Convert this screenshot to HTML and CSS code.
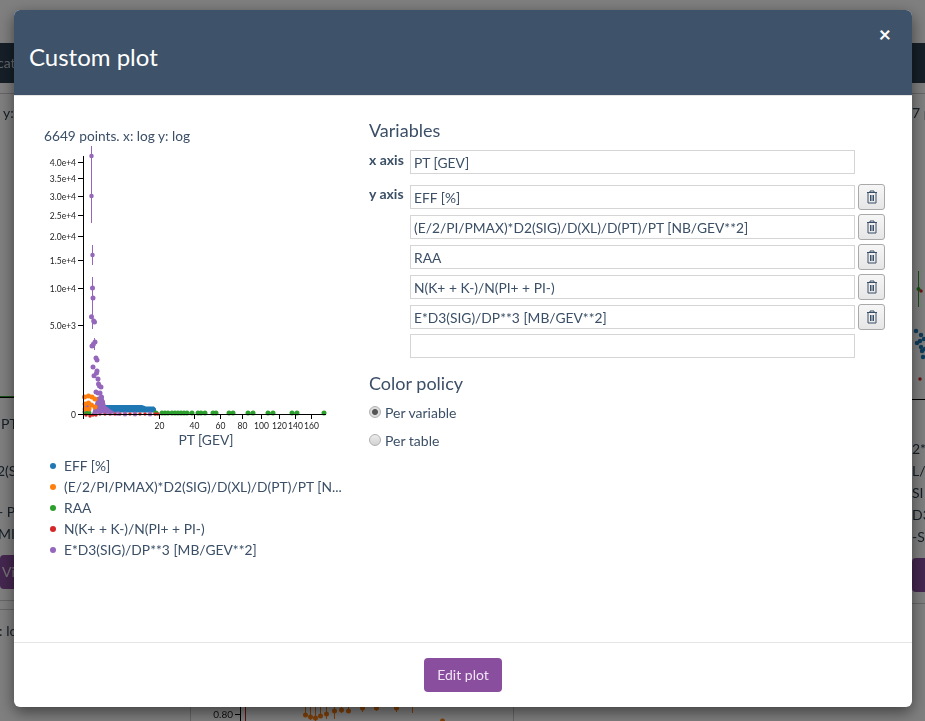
FILE: index.html
```html
<!doctype html>
<html>
<head>
    <meta charset="utf-8"/>
    <title>custom plot</title>
    <link rel="stylesheet" href="styles.css">
</head>
<body>

<div id="page">
    <div class="navbar"><span>cat</span></div>
    <div class="cards">
        <div class="card card-left">
            <div class="caption">y:</div>
            <div class="fake-plot"></div>
            <div class="fake-axis"></div>
            <div class="t1">PT</div>
            <div class="t2">2(S</div>
            <div class="t3">- P</div>
            <div class="t4">MI</div>
            <div class="fake-btn">Vi</div>
            <div class="rule"></div>
            <div class="rule rule-2"></div>
            <div class="next">r: lo</div>
        </div>
        <div class="card card-mid">
            <svg class="peek" viewBox="190 707 322 14" width="322" height="14">
                <text x="232" y="717.5" text-anchor="end">0.80</text>
                <path d="M234 714.500h5M239.500 707v14" stroke="#000" fill="none"/>
                <path d="M244.500 707v14" stroke="#c02020" fill="none"/>
                <path d="M304.500 707v10M309.500 707v13M314.500 707v14M319.500 707v10M325.500 707v12M333.500 707v12M340.500 707v6M347.500 707v6M361.500 707v5M375.500 707v4M395.500 707v5M411.500 707v6" stroke="#ff7f0e" fill="none"/>
                <path d="M304.500 715h0M309.500 717h0M314.500 718h0M319.500 716h0M325.500 714h0M333.500 711h0M340.500 710h0M347.500 711h0M361.500 708h0M375.500 708h0M395.500 708h0M441.500 721h0" stroke="#ff7f0e" stroke-width="5" stroke-linecap="round" fill="none"/>
            </svg>
        </div>
        <div class="card card-right">
            <div class="caption">7 points</div>
            <svg class="spots" viewBox="912 260 13 130" width="13" height="130">
                <path d="M918.500 262v36" stroke="#2ca02c" fill="none"/>
                <path d="M918.500 280h0" stroke="#2ca02c" stroke-width="4" stroke-linecap="round"/>
                <path d="M921 282h0M920 370h0" stroke="#d62728" stroke-width="3.500" stroke-linecap="round"/>
                <path d="M916 322h0M917 334h0M921 338h0M922 342h0M924 330h0M925 340h0M923 348h0M920 332h0M921 326h0" stroke="#1f77b4" stroke-width="4.500" stroke-linecap="round"/>
            </svg>
            <div class="fake-axis"></div>
            <div class="t1">2*</div>
            <div class="t2">L/N</div>
            <div class="t3">SI</div>
            <div class="t4">D3(</div>
            <div class="t5">-S</div>
            <div class="fake-btn"></div>
            <div class="rule"></div>
        </div>
    </div>
</div>

<div id="overlay">
    <div class="modal">
        <div class="modal-header">
            <h3>Custom plot</h3>
            <span class="close">&times;</span>
        </div>
        <div class="modal-body">
            <div class="plot-col">
                <div class="plot-caption">6649 points. x: log y: log</div>
                <svg class="plot" viewBox="40 146 305 305" width="305" height="305">
                    <g class="ticks">
                        <text x="76" y="165.500">4.0e+4</text>
                        <text x="76" y="181.500">3.5e+4</text>
                        <text x="76" y="199.500">3.0e+4</text>
                        <text x="76" y="218.500">2.5e+4</text>
                        <text x="76" y="239.500">2.0e+4</text>
                        <text x="76" y="263.500">1.5e+4</text>
                        <text x="76" y="291.500">1.0e+4</text>
                        <text x="76" y="328.500">5.0e+3</text>
                        <text x="76" y="417.500">0</text>
                    </g>
                    <g class="ticks ticks-x">
                        <text x="159.500" y="428.500">20</text>
                        <text x="194.500" y="428.500">40</text>
                        <text x="220.500" y="428.500">60</text>
                        <text x="242.500" y="428.500">80</text>
                        <text x="261.500" y="428.500">100</text>
                        <text x="279.500" y="428.500">120</text>
                        <text x="295.500" y="428.500">140</text>
                        <text x="311.500" y="428.500">160</text>
                    </g>

                    <!-- blue band -->
                    <path class="band" d="M104 405h38l4 1.500h8l2 2v4h-52z"/>

                    <!-- green -->
                    <path class="dots green" d="M85 412h0M89 413h0M156 413h0M162 413h0M165 413h0M168 413h0M172 413h0M175 413h0M178 413h0M181 413h0M184 413h0M187 413h0M192 413h0M198 413h0M201 413h0M205 413h0M213 413h0M216 413h0M229 413h0M233 413h0M248 413h0M253 413h0M268 413h0M273 413h0M292 413h0M297 413h0M324 413h0"/>

                    <!-- red -->
                    <path class="dots red thin" d="M86 415h0M90 416h0M93 415h0M96 415h0M100 414h0M105 414h0M110 414h0M115 414h0M120 414h0M125 414h0M130 414h0M135 414h0M140 414h0M145 414h0M150 414h0M155 414h0M158 414h0"/>

                    <!-- purple -->
                    <path class="errs" d="M91.500 146v77M92.500 245v20M92.500 277v30M92.500 305v24M94.500 338v12"/>
                    <path class="dots purple small" d="M91.500 156h0M91.500 196h0M92.500 255h0"/>
                    <path class="dots purple" d="M92.500 288h0M93 298h0M91.500 316.700h0M93.700 321h0M94.500 322h0M95 342h0M93.500 344h0M92 346h0M96 358h0M97 360h0M93 367h0M97 371h0M96.500 373h0M94 375.700h0M98 379h0M98.500 384h0M99.500 386h0M101 387h0M96 392h0M98 393h0M100 393h0M101.500 397h0M99 399h0M102.500 402h0"/>
                    <path class="wedge" d="M97 397l6-1 3 10 9 7-23 1zM84 404l3-2 4 7-7 3z"/>
                    <path class="dots purple faint" d="M96 408h0M100 409h0M104 410h0M108 412h0M112 413h0M118 413.500h0M125 414h0M135 414h0M150 414h0"/>

                    <!-- orange -->
                    <path class="dots orange" d="M84.500 397h0M88.500 396h0M92 397h0M95 399h0M85 404h0M88.500 403h0M91.500 405h0M95 407h0M85 409h0M89 409h0"/>

                    <path class="axis" d="M83.500 156v263M78 414.500h248"/>
                    <path class="axis" d="M78 162.500h5M78 178.500h5M78 196.500h5M78 215.500h5M78 236.500h5M78 260.500h5M78 288.500h5M78 325.500h5M159.500 414v5M194.500 414v5M220.500 414v5M242.500 414v5M261.500 414v5M279.500 414v5M295.500 414v5M311.500 414v5"/>

                    <text class="axis-label" x="206" y="445">PT [GEV]</text>
                </svg>
                <ul class="legend">
                    <li><i class="c-blue"></i>EFF [%]</li>
                    <li><i class="c-orange"></i>(E/2/PI/PMAX)*D2(SIG)/D(XL)/D(PT)/PT [N...</li>
                    <li><i class="c-green"></i>RAA</li>
                    <li><i class="c-red"></i>N(K+ + K-)/N(PI+ + PI-)</li>
                    <li><i class="c-purple"></i>E*D3(SIG)/DP**3 [MB/GEV**2]</li>
                </ul>
            </div>

            <div class="form-col">
                <h4>Variables</h4>
                <div class="axis-row x-row">
                    <label>x axis</label>
                    <div class="axis-inputs">
                        <div class="var-row"><input value="PT [GEV]"></div>
                    </div>
                </div>
                <div class="axis-row">
                    <label class="y-label">y axis</label>
                    <div class="axis-inputs">
                        <div class="var-row"><input value="EFF [%]"><button><svg width="12" height="14"><use href="#trash"/></svg></button></div>
                        <div class="var-row"><input value="(E/2/PI/PMAX)*D2(SIG)/D(XL)/D(PT)/PT [NB/GEV**2]"><button><svg width="12" height="14"><use href="#trash"/></svg></button></div>
                        <div class="var-row"><input value="RAA"><button><svg width="12" height="14"><use href="#trash"/></svg></button></div>
                        <div class="var-row"><input value="N(K+ + K-)/N(PI+ + PI-)"><button><svg width="12" height="14"><use href="#trash"/></svg></button></div>
                        <div class="var-row"><input value="E*D3(SIG)/DP**3 [MB/GEV**2]"><button><svg width="12" height="14"><use href="#trash"/></svg></button></div>
                        <div class="var-row"><input value=""></div>
                    </div>
                </div>
                <h4 class="policy">Color policy</h4>
                <label class="radio"><input type="radio" name="policy" checked>Per variable</label>
                <label class="radio"><input type="radio" name="policy">Per table</label>
            </div>
        </div>
        <div class="modal-footer">
            <a class="btn-edit">Edit plot</a>
        </div>
    </div>
</div>

<svg class="defs" width="0" height="0">
    <symbol id="trash" viewBox="0 0 12 14">
        <path d="M1 2.500h10M4 2.500v-1.500h4v1.500M2 2.500v10.500h8v-10.500M4.500 5v6M6 5v6M7.500 5v6" fill="none" stroke="#3b4f66" stroke-width="1"/>
    </symbol>
</svg>

</body>
</html>
```

FILE: styles.css
```css
html, body {
    margin: 0;
    height: 100%;
    overflow: hidden;
}
body {
    background: #fff;
    font-family: Lato, "Open Sans", sans-serif;
    font-size: 14px;
    color: #3b4f66;
}

/* page behind the dialog */
#page {
    height: 721px;
    filter: blur(0.5px);
    color: #2c3e50;
    font-size: 14px;
    overflow: hidden;
}
.navbar {
    margin-top: 43px;
    height: 40px;
    line-height: 40px;
    background: #2c3e50;
    color: #c8ced4;
    border-bottom: 10px solid #fff;
    box-shadow: 0 1px 0 #ccc;
}
.navbar span {
    margin-left: -3px;
}
.cards {
    display: flex;
    height: 628px;
}
.card {
    white-space: nowrap;
    line-height: 20px;
}
.card-left {
    width: 14px;
    flex: none;
}
.card-mid {
    flex: 1;
    display: flex;
    align-items: flex-end;
    padding-left: 176px;
}
.card-right {
    width: 13px;
    flex: none;
    margin-left: auto;
}
.caption {
    margin-top: 10px;
}
.card-left .caption {
    margin-left: 3px;
}
.fake-plot {
    height: 273px;
}
.spots {
    display: block;
    margin-top: 146px;
}
.fake-axis {
    height: 1px;
    background: #000;
}
.card-left .fake-axis {
    background: #2ca02c;
    box-shadow: 0 1px 0 #000;
}
.t1 {
    margin-top: 20px;
}
.t2, .t3, .t4, .t5 {
    margin-top: 2px;
}
.card-left .t1 {
    margin-top: 17px;
    margin-left: 1px;
}
.card-left .t2 {
    margin-top: 27px;
    margin-left: -3px;
}
.card-left .t3 {
    margin-top: 21px;
    margin-left: -2px;
}
.card-left .t4 {
    margin-top: 2px;
    margin-left: -2px;
}
.card-right .t1 {
    margin-top: 39px;
}
.fake-btn {
    margin-top: 11px;
    height: 34px;
    width: 60px;
    background: #8a4e9e;
    color: #f0e4f4;
    line-height: 34px;
    border-radius: 4px;
    padding-left: 2px;
    box-sizing: border-box;
}
.card-right .fake-btn {
    margin-top: 11px;
}
.rule {
    margin-top: 11px;
    height: 1px;
    background: #ccc;
}
.rule-2 {
    margin-top: 8px;
}
.next {
    margin-top: 11px;
    margin-left: -6px;
}
.peek {
    display: block;
    border-left: 1px solid #ccc;
    border-right: 1px solid #ccc;
}
.peek text {
    font-size: 10px;
    fill: #222;
}
.defs {
    display: block;
}

#overlay {
    position: fixed;
    top: 0;
    left: 0;
    width: 100%;
    height: 100%;
    background: rgba(0, 0, 0, .5);
}
.modal {
    margin: 10px 0 0 14px;
    width: 898px;
    height: 697px;
    background: #fff;
    border-radius: 6px;
    box-shadow: 0 5px 15px rgba(0, 0, 0, .5);
    overflow: hidden;
}
.modal-header {
    display: flex;
    justify-content: space-between;
    height: 85px;
    background: #3e5269;
    border-bottom: 1px solid #e5e5e5;
    color: #fff;
}
.modal-header h3 {
    margin: 32px 0 0 15px;
    font-size: 24px;
    font-weight: 400;
    line-height: 30px;
}
.close {
    margin: 10px 21px 0 0;
    font-size: 21px;
    font-weight: 700;
    line-height: 28px;
}
.modal-body {
    display: grid;
    grid-template-columns: 325px 1fr;
    height: 546px;
    padding: 0 27px 0 30px;
    box-sizing: border-box;
}
.plot-caption {
    margin-top: 30px;
    font-size: 13.700px;
    line-height: 20px;
}
.plot {
    display: block;
    margin-left: -4px;
}
.ticks text {
    font-size: 8.500px;
    fill: #222;
    text-anchor: end;
}
.ticks-x text {
    text-anchor: middle;
}
.axis {
    fill: none;
    stroke: #000;
    stroke-width: 1;
}
.axis-label {
    font-size: 13.800px;
    fill: #3b4f66;
    text-anchor: middle;
}
.dots {
    fill: none;
    stroke-width: 5;
    stroke-linecap: round;
}
.small {
    stroke-width: 4.500;
}
.thin {
    stroke-width: 3.500;
}
.faint {
    opacity: .7;
}
.band {
    fill: #1f77b4;
}
.orange {
    stroke: #ff7f0e;
}
.green {
    stroke: #2ca02c;
}
.red {
    stroke: #d62728;
}
.purple {
    stroke: #9467bd;
}
.errs {
    fill: none;
    stroke: #9467bd;
    stroke-width: 1;
}
.wedge {
    fill: #9467bd;
}
.legend {
    list-style: none;
    margin: 4px 0 0 2px;
    padding: 0;
    font-size: 13.800px;
    line-height: 21px;
    white-space: nowrap;
}
.legend li {
    display: flex;
    align-items: center;
}
.legend i {
    width: 6px;
    height: 6px;
    margin: 0 8px 0 4px;
    border-radius: 50%;
}
.c-blue {
    background: #1f77b4;
}
.c-orange {
    background: #ff7f0e;
}
.c-green {
    background: #2ca02c;
}
.c-red {
    background: #d62728;
}
.c-purple {
    background: #9467bd;
}

.form-col h4 {
    margin: 24px 0 10px;
    font-size: 18px;
    font-weight: 400;
    line-height: 20px;
}
.form-col .policy {
    margin: 15px 0 5px;
}
.axis-row {
    display: flex;
}
.x-row {
    margin-bottom: 10px;
}
.axis-row label {
    width: 41px;
    flex: none;
    font-size: 14px;
    font-weight: 700;
    line-height: 20px;
}
.axis-inputs {
    display: flex;
    flex-direction: column;
    gap: 4px;
}
.var-row {
    display: flex;
    align-items: center;
    gap: 3px;
}
.var-row input {
    width: 445px;
    height: 24px;
    box-sizing: border-box;
    padding: 0 3px;
    border: 1px solid #d5d5d5;
    font: 13.800px Lato, sans-serif;
    color: #3b4f66;
    outline: none;
}
.var-row button {
    display: flex;
    align-items: center;
    justify-content: center;
    width: 27px;
    height: 26px;
    padding: 0;
    border: 1px solid #a9a9a9;
    border-radius: 3px;
    background: linear-gradient(#f6f6f6, #e6e6e6);
}
.radio {
    display: flex;
    align-items: center;
    height: 28px;
    font-size: 14px;
}
.radio input {
    appearance: none;
    width: 12px;
    height: 12px;
    margin: 0 4px 0 0;
    border: 1px solid #b0b0b0;
    border-radius: 50%;
    background: linear-gradient(#ececec, #d2d2d2);
}
.radio input:checked {
    background: radial-gradient(circle, #555 0 2.500px, #dcdcdc 3.500px);
}
.modal-footer {
    display: flex;
    justify-content: center;
    padding-top: 15px;
    border-top: 1px solid #e5e5e5;
}
.btn-edit {
    width: 78px;
    height: 34px;
    line-height: 34px;
    text-align: center;
    background: #8a4e9e;
    border-radius: 4px;
    color: #f0e4f4;
    font-size: 14px;
}
```
